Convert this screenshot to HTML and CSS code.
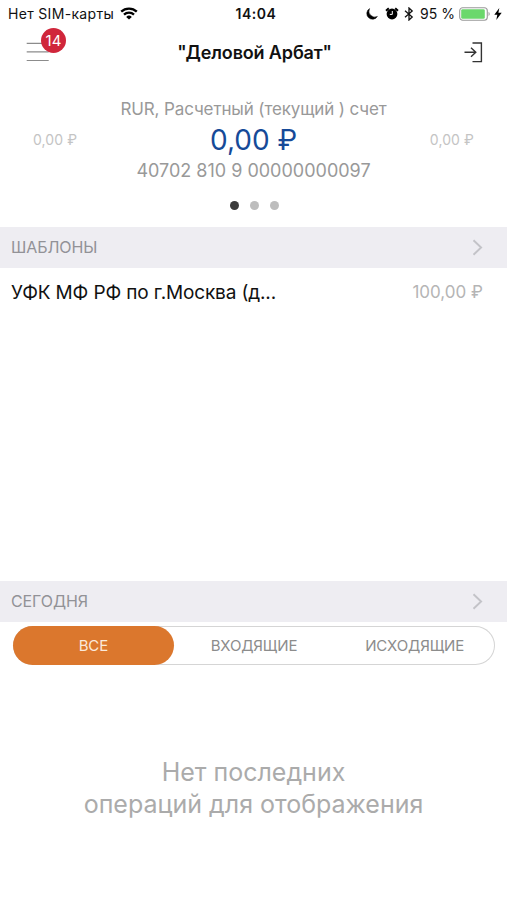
FILE: index.html
```html
<!DOCTYPE html>
<html lang="ru">

<head>
<meta charset="utf-8">
<title>Деловой Арбат</title>
<link rel="stylesheet" href="styles.css">
</head>

<body>

<div class="status">
  <div class="status-left">
    <span class="carrier">Нет SIM-карты</span>
    <svg class="wifi" width="18" height="13" viewBox="0 0 18 13">
      <path d="M1.2 4.7a11.2 11.2 0 0 1 15.6 0M4 7.7a7.2 7.2 0 0 1 10 0" fill="none" stroke="#000" stroke-width="2.3"/>
      <path d="M9 12.6L6.2 9.9a4 4 0 0 1 5.6 0z"/>
    </svg>
  </div>
  <span class="time">14:04</span>
  <div class="status-right">
    <svg width="12" height="12" viewBox="0 0 12 12">
      <path d="M3.6 .6A5.7 5.7 0 1 0 11.4 8.4 5.8 5.8 0 0 1 3.6 .6z" stroke="#000" stroke-width=".5"/>
    </svg>
    <svg class="alarm" width="14" height="13" viewBox="0 0 14 13">
      <circle cx="7" cy="7" r="5.4"/>
      <path d="M1 3.7L3.8 1.3M13 3.7l-2.8-2.4" stroke="#000" stroke-width="2"/>
      <path d="M7.3 4v3.4H4.8" fill="none" stroke="#fff" stroke-width="1"/>
    </svg>
    <svg class="bluetooth" width="10" height="14" viewBox="0 0 10 14">
      <path d="M1 3.8l7.2 6.2L5 13V1l3.2 3L1 10.2" fill="none" stroke="#111" stroke-width="1.3"/>
    </svg>
    <span class="percent">95 %</span>
    <svg class="battery" width="32" height="14" viewBox="0 0 32 14">
      <rect x=".7" y=".7" width="27.6" height="12.6" rx="3" fill="#fff" stroke="#999" stroke-width="1.1"/>
      <rect x="2.2" y="2.2" width="23.6" height="9.6" rx="1.4" fill="#6bd86c"/>
      <path d="M29.6 4.8q2 2.2 0 4.4z" fill="#888"/>
    </svg>
    <svg class="bolt" width="8" height="12" viewBox="0 0 8 12">
      <path d="M5.3 0L.3 6.8h3L2.3 12l5.4-7.2H4.4z"/>
    </svg>
  </div>
</div>

<header class="header">
  <button class="menu" type="button">
    <svg width="24" height="20" viewBox="0 0 24 20">
      <path d="M.7 1.3h22M.7 9.9h22M.7 18.5h22" stroke="#8c8c8c" stroke-width="1.2"/>
    </svg>
    <span class="badge">14</span>
  </button>
  <h1 class="title">"Деловой Арбат"</h1>
  <button class="exit" type="button">
    <svg width="19" height="21" viewBox="0 0 19 21">
      <path d="M8.5 1h8.9v18.6H8.5M.5 10.3h11.2M7 5.8l4.8 4.5L7 14.8" fill="none" stroke="#333" stroke-width="1.4"/>
    </svg>
  </button>
</header>

<section class="accounts">
  <span class="side">0,00 ₽</span>
  <div class="account">
    <div class="account-name">RUR, Расчетный (текущий ) счет</div>
    <div class="balance">0,00 ₽</div>
    <div class="number">40702 810 9 00000000097</div>
  </div>
  <span class="side">0,00 ₽</span>
</section>

<div class="dots">
  <i class="dot dot-active"></i>
  <i class="dot"></i>
  <i class="dot"></i>
</div>

<section class="templates">
  <h2 class="bar">
    <span class="bar-text">ШАБЛОНЫ</span>
    <svg width="11" height="17" viewBox="0 0 11 17">
      <path d="M1.5 1.3l7.6 7.2-7.6 7.2" fill="none" stroke="#c3c3c8" stroke-width="1.9"/>
    </svg>
  </h2>
  <div class="template">
    <span class="template-name">УФК МФ РФ по г.Москва (д...</span>
    <span class="template-sum">100,00 ₽</span>
  </div>
</section>

<section class="today">
  <h2 class="bar">
    <span class="bar-text">СЕГОДНЯ</span>
    <svg width="11" height="17" viewBox="0 0 11 17">
      <path d="M1.5 1.3l7.6 7.2-7.6 7.2" fill="none" stroke="#c3c3c8" stroke-width="1.9"/>
    </svg>
  </h2>
  <div class="tabs">
    <button class="tab tab-active" type="button">ВСЕ</button>
    <button class="tab" type="button">ВХОДЯЩИЕ</button>
    <button class="tab" type="button">ИСХОДЯЩИЕ</button>
  </div>
  <p class="empty">Нет последних<br>операций для отображения</p>
</section>

</body>
</html>
```
FILE: styles.css
```css
* {
  box-sizing: border-box;
}

body {
  margin: 0;
  height: 900px;
  background: #fff;
  color: #111;
  font-family: Inter, "Liberation Sans", sans-serif;
  overflow: hidden;
}

svg {
  display: block;
  flex: none;
}

button {
  padding: 0;
  border: 0;
  background: none;
  font: inherit;
}

/* статус-бар */

.status {
  display: grid;
  grid-template-columns: 1fr auto 1fr;
  align-items: center;
  height: 27px;
  padding: 0 5px 0 8px;
  font-size: 14px;
  white-space: nowrap;
}

.status-left,
.status-right {
  display: flex;
  align-items: center;
}

.status-right {
  justify-content: flex-end;
}

.carrier {
  letter-spacing: 0.32px;
}

.wifi {
  margin-left: 6px;
}

.time {
  padding-left: 2px;
  font-weight: 600;
  letter-spacing: 0.5px;
}

.alarm {
  margin-left: 7px;
}

.bluetooth {
  margin-left: 5px;
}

.percent {
  margin-left: 6px;
}

.battery {
  margin-left: 4px;
}

.bolt {
  margin-left: 3px;
}

/* шапка */

.header {
  display: flex;
  align-items: center;
  justify-content: space-between;
  height: 50px;
  padding: 0 24px 0 26px;
}

.menu {
  position: relative;
}

.badge {
  position: absolute;
  top: -14px;
  left: 15px;
  width: 25px;
  height: 25px;
  border-radius: 50%;
  background: #d0263b;
  color: #fff;
  font-size: 15px;
  line-height: 25px;
  text-align: center;
}

.title {
  margin: 0;
  padding-right: 5px;
  font-size: 18px;
  font-weight: 600;
  letter-spacing: -0.15px;
}

/* счета */

.accounts {
  display: flex;
  align-items: center;
  justify-content: space-between;
  height: 125px;
  padding: 0 33px;
}

.side {
  color: #c4c4c4;
  font-size: 14px;
  letter-spacing: 0.1px;
}

.account {
  color: #999;
  text-align: center;
}

.account-name {
  font-size: 17px;
  line-height: 26px;
  letter-spacing: -0.13px;
}

.balance {
  color: #164a98;
  font-size: 28px;
  line-height: 36px;
}

.number {
  font-size: 18px;
  line-height: 26px;
}

.dots {
  display: flex;
  justify-content: center;
  gap: 11px;
  height: 26px;
  margin-top: -1px;
  padding-left: 1px;
}

.dot {
  width: 9px;
  height: 9px;
  border-radius: 50%;
  background: #bdbdbd;
}

.dot-active {
  background: #3b3b3b;
}

/* списки */

.bar {
  display: flex;
  align-items: center;
  justify-content: space-between;
  height: 41px;
  margin: 0;
  padding: 0 24px 0 11px;
  background: #eeedf2;
  color: #929297;
  font-size: 16px;
  font-weight: 400;
}

.bar-text {
  padding-bottom: 2px;
  letter-spacing: -0.1px;
}

.templates {
  height: 354px;
}

.template {
  display: flex;
  align-items: center;
  justify-content: space-between;
  height: 48px;
  padding: 0 24px 0 11px;
}

.template-name {
  font-size: 19px;
  letter-spacing: -0.14px;
}

.template-sum {
  color: #b5b5b5;
  font-size: 17px;
}

.tabs {
  display: grid;
  grid-template-columns: repeat(3, 1fr);
  height: 39px;
  margin: 4px 12px 0 13px;
  border-radius: 20px;
  box-shadow: inset 0 0 0 1px #d5d5d5;
}

.tab {
  border-radius: 20px;
  color: #8c8c8c;
  font-size: 15px;
  letter-spacing: -0.15px;
}

.tab-active {
  background: #db772d;
  color: #fbe9da;
}

.empty {
  margin: 91px 0 0;
  color: #ababab;
  font-size: 25px;
  line-height: 32px;
  text-align: center;
}
```
